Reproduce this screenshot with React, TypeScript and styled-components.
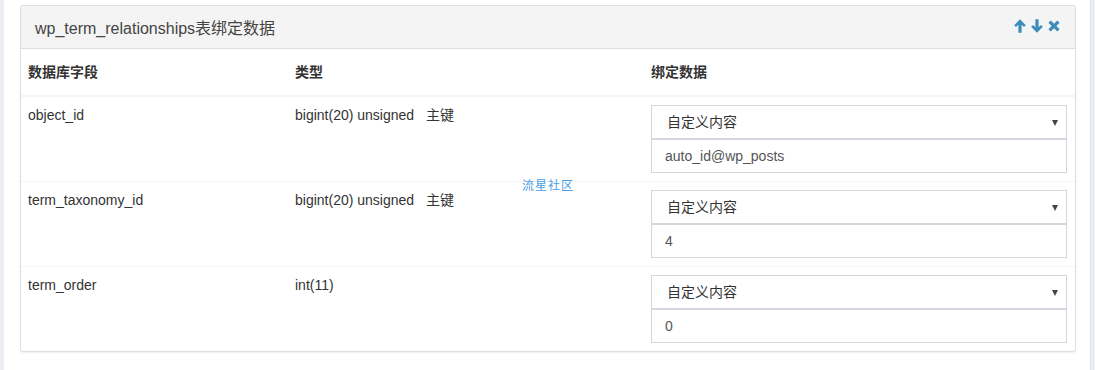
import React from 'react'
import styled, { createGlobalStyle } from 'styled-components'

const GlobalStyle = createGlobalStyle`
  html, body {
    margin: 0;
    padding: 0;
    background: #fff;
  }
  body {
    font-family: "Liberation Sans", Arial, "Noto Sans CJK SC", sans-serif;
    font-size: 14px;
    color: #333;
  }
`

const Page = styled.div`
  position: relative;
  display: flex;
  height: 370px;
  overflow: hidden;
`

const SideStrip = styled.div<{ $right?: boolean }>`
  flex: 0 0 ${p => (p.$right ? '5px' : '4px')};
  background: #eceef4;
  border-left: ${p => (p.$right ? '1px solid #e2e4ea' : 'none')};
  box-sizing: border-box;
`

const Main = styled.div`
  flex: 1;
  padding: 5px 14px 0 16px;
`

const Box = styled.div`
  border: 1px solid #ddd;
  border-radius: 3px;
  box-shadow: 0 1px 1px rgba(0, 0, 0, 0.06);
  background: #fff;
`

const BoxHeader = styled.div`
  height: 42px;
  display: flex;
  align-items: center;
  justify-content: space-between;
  padding: 0 15px 0 14px;
  background: #f4f4f4;
  border-bottom: 1px solid #ddd;
  border-radius: 3px 3px 0 0;
`

const Title = styled.h3`
  margin: 0 0 1px;
  font-size: 16px;
  font-weight: normal;
  color: #444;
`

const Tools = styled.div`
  display: flex;
  align-items: center;
  gap: 5px;
  margin-bottom: 3px;
`

const ToolIcon = styled.svg`
  display: block;
  fill: #3c8dbc;
`

const Table = styled.table`
  width: 100%;
  border-collapse: collapse;
  table-layout: fixed;
`

const Th = styled.th`
  text-align: left;
  font-weight: bold;
  padding: 13px 8px 13px 7px;
  line-height: 20px;
  border-bottom: 2px solid #f4f4f4;
  color: #333;
`

const Row = styled.tr`
  & + & td {
    border-top: 1px solid #f4f4f4;
  }
`

const Td = styled.td`
  vertical-align: top;
  padding: 8px 8px 8px 7px;
  line-height: 20px;
`

const Key = styled.span`
  margin-left: 12px;
`

const SelectWrap = styled.div`
  position: relative;
`

const Select = styled.select`
  display: block;
  width: 100%;
  height: 34px;
  box-sizing: border-box;
  border: 1px solid #d2d6de;
  border-radius: 0;
  background: #fff;
  padding: 0 24px 0 15px;
  font-family: inherit;
  font-size: 14px;
  color: #333;
  appearance: none;
  outline: none;
`

const Caret = styled.span`
  position: absolute;
  right: 9px;
  top: 15px;
  width: 0;
  height: 0;
  border-left: 3px solid transparent;
  border-right: 3px solid transparent;
  border-top: 6px solid #444;
  pointer-events: none;
`

const Input = styled.input`
  display: block;
  width: 100%;
  height: 34px;
  box-sizing: border-box;
  border: 1px solid #d2d6de;
  border-radius: 0;
  padding: 6px 12px 6px 13px;
  font-family: inherit;
  font-size: 14px;
  color: #555;
  outline: none;
`

const Watermark = styled.span`
  position: absolute;
  left: 522px;
  top: 176px;
  font-size: 12px;
  letter-spacing: 1px;
  color: #4a9de4;
`

const fields = [
  { name: 'object_id', type: 'bigint(20) unsigned', primary: true, value: 'auto_id@wp_posts' },
  { name: 'term_taxonomy_id', type: 'bigint(20) unsigned', primary: true, value: '4' },
  { name: 'term_order', type: 'int(11)', primary: false, value: '0' },
]

const App = () => {
  return (
    <>
      <GlobalStyle />
      <Page>
        <SideStrip />
        <Main>
          <Box>
            <BoxHeader>
              <Title>wp_term_relationships表绑定数据</Title>
              <Tools>
                <ToolIcon width="12" height="14" viewBox="0 0 12 14">
                  <path d="M6 0.3 L11.8 6.3 L10 8.1 L7.6 5.7 V13.7 H4.4 V5.7 L2 8.1 L0.2 6.3 Z" />
                </ToolIcon>
                <ToolIcon width="12" height="14" viewBox="0 0 12 14">
                  <path d="M6 13.7 L11.8 7.7 L10 5.9 L7.6 8.3 V0.3 H4.4 V8.3 L2 5.9 L0.2 7.7 Z" />
                </ToolIcon>
                <ToolIcon width="12" height="12" viewBox="0 0 12 12">
                  <path d="M0.4 2.7 L2.7 0.4 L6 3.7 L9.3 0.4 L11.6 2.7 L8.3 6 L11.6 9.3 L9.3 11.6 L6 8.3 L2.7 11.6 L0.4 9.3 L3.7 6 Z" />
                </ToolIcon>
              </Tools>
            </BoxHeader>
            <Table>
              <colgroup>
                <col style={{ width: 267 }} />
                <col style={{ width: 356 }} />
                <col />
              </colgroup>
              <thead>
                <tr>
                  <Th>数据库字段</Th>
                  <Th>类型</Th>
                  <Th>绑定数据</Th>
                </tr>
              </thead>
              <tbody>
                {fields.map(f => (
                  <Row key={f.name}>
                    <Td>{f.name}</Td>
                    <Td>
                      {f.type}
                      {f.primary && <Key>主键</Key>}
                    </Td>
                    <Td>
                      <SelectWrap>
                        <Select defaultValue="custom">
                          <option value="custom">自定义内容</option>
                        </Select>
                        <Caret />
                      </SelectWrap>
                      <Input defaultValue={f.value} />
                    </Td>
                  </Row>
                ))}
              </tbody>
            </Table>
          </Box>
        </Main>
        <SideStrip $right />
        <Watermark>流星社区</Watermark>
      </Page>
    </>
  )
}

export default App
